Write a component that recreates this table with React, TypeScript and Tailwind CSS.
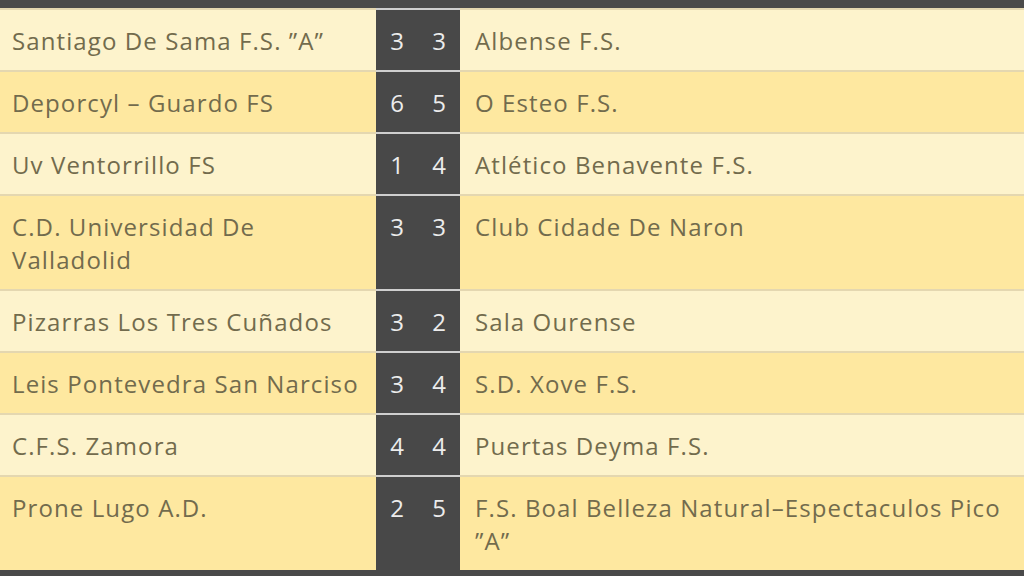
import React from "react";

const matches: [string, number, number, string][] = [
  ["Santiago De Sama F.S. \u201dA\u201d", 3, 3, "Albense F.S."],
  ["Deporcyl \u2013 Guardo FS", 6, 5, "O Esteo F.S."],
  ["Uv Ventorrillo FS", 1, 4, "Atlético Benavente F.S."],
  ["C.D. Universidad De Valladolid", 3, 3, "Club Cidade De Naron"],
  ["Pizarras Los Tres Cuñados", 3, 2, "Sala Ourense"],
  ["Leis Pontevedra San Narciso", 3, 4, "S.D. Xove F.S."],
  ["C.F.S. Zamora", 4, 4, "Puertas Deyma F.S."],
  ["Prone Lugo A.D.", 2, 5, "F.S. Boal Belleza Natural\u2013Espectaculos Pico \u201dA\u201d"],
];

export default function App() {
  return (
    <div
      className="w-[1024px] h-[576px] overflow-hidden bg-[#4a4a4a] pt-[8px]"
      style={{ fontFamily: '"Open Sans", "Noto Sans", sans-serif' }}
    >
      {matches.map(([home, a, b, away], i) => {
        const bg = i % 2 === 0 ? "bg-[#fdf3cc]" : "bg-[#fee8a0]";
        return (
          <div key={i} className="grid grid-cols-[376px_42px_42px_1fr]">
            <div
              className={`${bg} border-t-2 border-[#e4d7b0] pl-3 pr-1 pt-[14px] pb-[13px] text-[24px] tracking-[1.1px] leading-[33px] text-[#726b4d]`}
            >
              {home}
            </div>
            <div className="border-t-2 border-[#cfcfcf] bg-[#484848] pt-[14px] pb-[13px] text-center text-[24px] leading-[33px] text-[#ececec]">
              {a}
            </div>
            <div className="border-t-2 border-[#cfcfcf] bg-[#484848] pt-[14px] pb-[13px] text-center text-[24px] leading-[33px] text-[#ececec]">
              {b}
            </div>
            <div
              className={`${bg} border-t-2 border-[#e4d7b0] pl-[15px] pr-3 pt-[14px] pb-[13px] text-[24px] tracking-[1.1px] leading-[33px] text-[#726b4d]`}
            >
              {away}
            </div>
          </div>
        );
      })}
    </div>
  );
}
